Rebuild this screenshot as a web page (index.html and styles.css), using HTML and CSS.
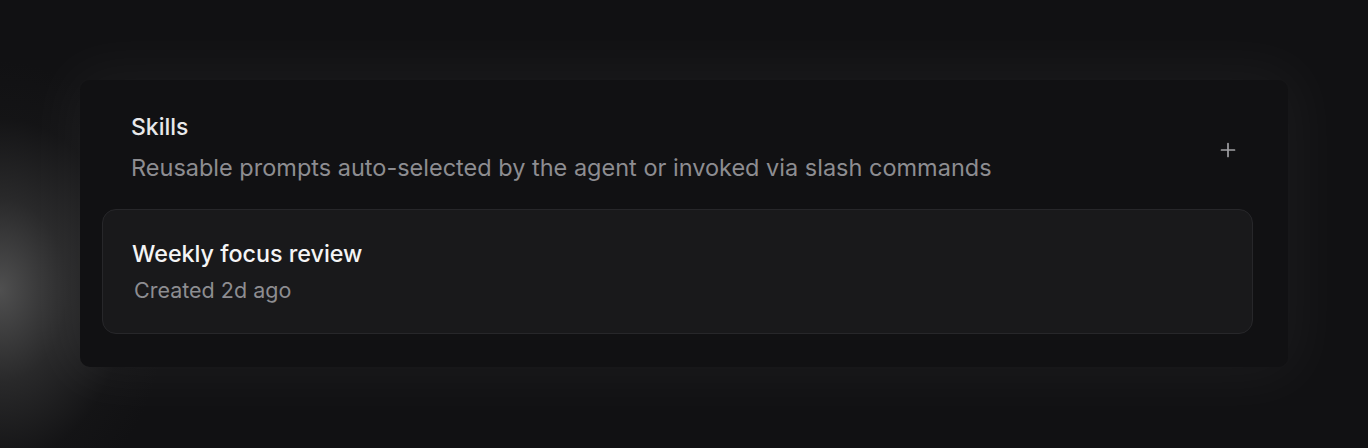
FILE: index.html
```html
<!DOCTYPE html>
<html>
<head>
<meta charset="utf-8">
<link rel="stylesheet" href="styles.css">
</head>
<body>
<div class="stage">
  <section class="panel">
    <header class="panel-head">
      <div class="head-text">
        <h2 class="title">Skills</h2>
        <p class="subtitle">Reusable prompts auto-selected by the agent or invoked via slash commands</p>
      </div>
      <button class="add-btn" aria-label="Add skill">
        <svg width="16" height="16" viewBox="0 0 16 16" fill="none" stroke="currentColor" stroke-width="1.7" stroke-linecap="round"><path d="M8 1.5v13M1.5 8h13"/></svg>
      </button>
    </header>
    <div class="card">
      <div class="card-title">Weekly focus review</div>
      <div class="card-meta">Created 2d ago</div>
    </div>
  </section>
</div>
</body>
</html>
```
FILE: styles.css
```css
html, body {
  margin: 0;
  height: 100%;
}
body {
  background:
    radial-gradient(ellipse 170px 230px at 0px 290px, rgba(95,95,95,0.8), rgba(70,70,70,0.45) 40%, rgba(40,40,40,0.12) 75%, rgba(40,40,40,0) 100%),
    #111113;
  font-family: Inter, "Noto Sans", sans-serif;
  overflow: hidden;
}
.stage {
  padding: 80px 80px 0 80px;
}
.panel {
  width: 1208px;
  height: 287px;
  box-sizing: border-box;
  background: #111113;
  border-radius: 10px;
  box-shadow: 0 0 60px 12px rgba(255,255,255,0.045);
  padding: 33px 35px 0 22px;
}
.panel-head {
  display: flex;
  align-items: center;
  padding: 0 17px 0 29px;
}
.head-text {
  flex: 1;
}
.title {
  margin: 0;
  font-size: 23px;
  font-weight: 450;
  color: #e8e8ea;
  line-height: 28px;
}
.subtitle {
  margin: 13px 0 0;
  font-size: 23.5px;
  font-weight: 400;
  color: #8d8d91;
  line-height: 28px;
}
.add-btn {
  background: none;
  border: 0;
  padding: 0;
  margin-top: 4px;
  color: #a0a0a4;
  width: 16px;
  height: 16px;
  display: flex;
}
.card {
  margin-top: 27px;
  height: 125px;
  box-sizing: border-box;
  background: #19191b;
  border: 1px solid #27272a;
  border-radius: 14px;
  padding: 30px 29px 0;
}
.card-title {
  font-size: 23.3px;
  font-weight: 500;
  color: #f4f4f5;
  line-height: 28px;
}
.card-meta {
  margin-top: 9px;
  font-size: 21.5px;
  color: #8d8d91;
  line-height: 26px;
  padding-left: 2px;
}
```
